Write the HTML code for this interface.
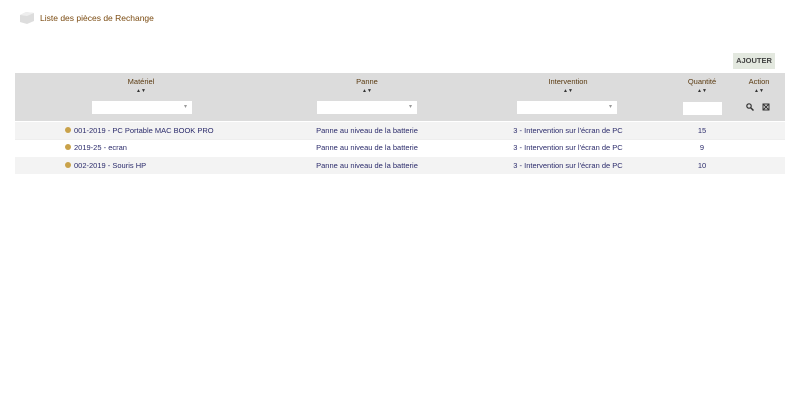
<!DOCTYPE html>
<html><head><meta charset="utf-8"><style>
body{margin:0;width:800px;height:418px;background:#fff;font-family:"Liberation Sans",sans-serif;font-size:7.5px;position:relative;overflow:hidden}
.a{position:absolute;white-space:nowrap}
.title{left:40px;top:13px;font-size:8.5px;color:#7a4a10}
.btn{left:733px;top:53px;width:42px;height:16px;background:#e3e8df;color:#444;font-size:7.5px;font-weight:bold;text-align:center;line-height:16px}
.hdr{left:15px;top:73px;width:770px;height:48px;background:#dcdcdc}
.th{top:77px;color:#5a3a10;text-align:center;width:100px}
.ar{top:88px;font-size:5px;color:#333;text-align:center;width:100px}
.sel{top:101px;height:13px;background:#fff;width:100px}
.sel:after{content:"▾";position:absolute;right:5px;top:2px;font-size:6px;color:#999}
.row{left:15px;width:770px;height:17px}
.c{color:#2b2b6b;line-height:17px}
.dot{display:inline-block;width:6px;height:6px;border-radius:50%;background:#c9a24a;margin-right:3px;vertical-align:0px}
</style></head><body>
<svg class="a" style="left:18px;top:10px" width="18" height="15"><path d="M2 5 L8 2 L16 3 L16 11 L9 14 L2 12Z" fill="#ddd"/><path d="M8 2 L16 3 L9 6 L2 5Z" fill="#eee"/></svg>
<div class="a title">Liste des pièces de Rechange</div>
<div class="a btn">AJOUTER</div>
<div class="a hdr"></div>
<div class="a th" style="left:91px">Matériel</div><div class="a ar" style="left:91px">▲▼</div><div class="a sel" style="left:92px"></div>
<div class="a th" style="left:317px">Panne</div><div class="a ar" style="left:317px">▲▼</div><div class="a sel" style="left:317px"></div>
<div class="a th" style="left:518px">Intervention</div><div class="a ar" style="left:518px">▲▼</div><div class="a sel" style="left:517px"></div>
<div class="a th" style="left:652px">Quantité</div><div class="a ar" style="left:652px">▲▼</div><div class="a" style="left:683px;top:102px;width:39px;height:13px;background:#fff"></div>
<div class="a th" style="left:709px">Action</div><div class="a ar" style="left:709px">▲▼</div>
<svg class="a" style="left:746px;top:103px" width="8" height="8"><circle cx="3" cy="3" r="2.2" fill="none" stroke="#333" stroke-width="1.2"/><path d="M4.6 4.6L7.5 7.5" stroke="#333" stroke-width="1.5"/></svg>
<svg class="a" style="left:762px;top:103px" width="8" height="8"><rect x="1" y="1" width="6" height="6" fill="none" stroke="#333"/><path d="M1 1L7 7M7 1L1 7" stroke="#333"/></svg>
<div class="a row" style="top:122px;background:#f3f3f3"></div>
<div class="a row" style="top:139px;background:#fff;border-top:1px solid #eee;border-bottom:1px solid #eee"></div>
<div class="a row" style="top:157px;background:#f3f3f3"></div>
<div class="a c" style="left:65px;top:122px"><span class="dot"></span>001-2019 - PC Portable MAC BOOK PRO</div>
<div class="a c" style="left:65px;top:139px"><span class="dot"></span>2019-25 - ecran</div>
<div class="a c" style="left:65px;top:157px"><span class="dot"></span>002-2019 - Souris HP</div>
<div class="a c" style="left:307px;top:122px;width:120px;text-align:center">Panne au niveau de la batterie</div>
<div class="a c" style="left:307px;top:139px;width:120px;text-align:center">Panne au niveau de la batterie</div>
<div class="a c" style="left:307px;top:157px;width:120px;text-align:center">Panne au niveau de la batterie</div>
<div class="a c" style="left:498px;top:122px;width:140px;text-align:center">3 - Intervention sur l'écran de PC</div>
<div class="a c" style="left:498px;top:139px;width:140px;text-align:center">3 - Intervention sur l'écran de PC</div>
<div class="a c" style="left:498px;top:157px;width:140px;text-align:center">3 - Intervention sur l'écran de PC</div>
<div class="a c" style="left:682px;top:122px;width:40px;text-align:center">15</div>
<div class="a c" style="left:682px;top:139px;width:40px;text-align:center">9</div>
<div class="a c" style="left:682px;top:157px;width:40px;text-align:center">10</div>
</body></html>
